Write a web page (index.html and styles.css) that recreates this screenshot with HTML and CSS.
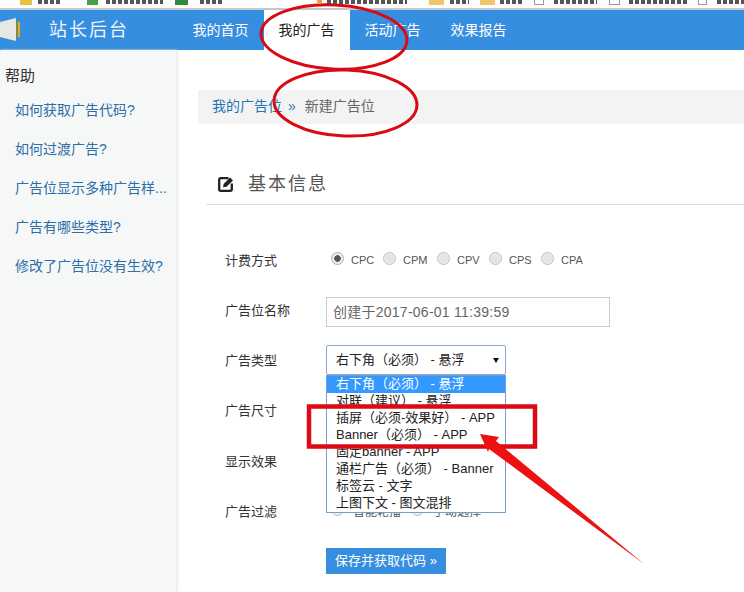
FILE: index.html
```html
<!DOCTYPE html>
<html lang="zh">
<head>
<meta charset="utf-8">
<title>站长后台</title>
<link rel="stylesheet" href="styles.css">
</head>
<body>
<div class="page">
  <div class="bookmarks">
    <i></i><i class="star"></i><i></i><i class="tx"></i>
    <i></i><i class="green"></i><i></i><i class="tx"></i>
    <i></i><i class="leaf"></i><i></i><i class="tx"></i>
    <i></i><i class="orange"></i><i></i><i class="tx"></i>
    <i></i><i class="folder"></i><i></i><i class="tx"></i>
    <i></i><i class="folder"></i><i></i><i class="tx"></i>
    <i></i><i class="doc"></i><i></i><i class="tx"></i>
    <i></i><i class="doc"></i><i></i><i class="tx"></i>
    <i></i><i class="doc"></i><i></i><i class="tx"></i>
  </div>
  <header class="header">
    <div class="logo">
      <svg width="20" height="24" viewBox="0 0 20 24"><path d="M0 4 16 0V23L0 19Z" fill="#e8e8e2"/><rect x="16" y="4" width="2" height="15" fill="#7d8f45"/><rect x="18" y="4" width="2" height="15" fill="#e8a52c"/></svg>
    </div>
    <div class="brand">站长后台</div>
    <nav class="nav">
      <a class="nav-item">我的首页</a>
      <a class="nav-item active">我的广告</a>
      <a class="nav-item">活动广告</a>
      <a class="nav-item">效果报告</a>
    </nav>
  </header>
  <div class="body">
    <aside class="side">
      <h3 class="side-title">帮助</h3>
      <ul class="side-list">
        <li>如何获取广告代码?</li>
        <li>如何过渡广告?</li>
        <li>广告位显示多种广告样...</li>
        <li>广告有哪些类型?</li>
        <li>修改了广告位没有生效?</li>
      </ul>
    </aside>
    <main class="main">
      <div class="crumb"><a>我的广告位</a><span class="sep">»</span><span class="cur">新建广告位</span></div>
      <div class="section">
        <svg class="edit" width="16" height="16" viewBox="0 0 16 16"><path d="M10.500 2.200H2.800Q1.200 2.200 1.200 3.800V13.200Q1.200 14.800 2.800 14.800H12.200Q13.800 14.800 13.800 13.200V7.500" fill="none" stroke="#222" stroke-width="2.300"/><path d="M5 11.300 5.600 8 12 1.600 15 4.500 8.500 10.800Z" fill="#222"/></svg>
        <h2>基本信息</h2>
      </div>
      <form class="form">
        <div class="row">
          <label class="lbl">计费方式</label>
          <div class="radios">
            <span class="opt opt-c"><span class="r on"></span><span class="rt">CPC</span></span>
            <span class="opt opt-m"><span class="r"></span><span class="rt">CPM</span></span>
            <span class="opt opt-c"><span class="r"></span><span class="rt">CPV</span></span>
            <span class="opt opt-c"><span class="r"></span><span class="rt">CPS</span></span>
            <span class="opt opt-c"><span class="r"></span><span class="rt">CPA</span></span>
          </div>
        </div>
        <div class="row">
          <label class="lbl">广告位名称</label>
          <div class="input">创建于2017-06-01 11:39:59</div>
        </div>
        <div class="row">
          <label class="lbl">广告类型</label>
          <div class="select-wrap">
            <div class="select">右下角（必须） - 悬浮<span class="caret"></span></div>
            <ul class="options">
              <li class="sel">右下角（必须） - 悬浮</li>
              <li>对联（建议） - 悬浮</li>
              <li>插屏（必须-效果好） - APP</li>
              <li>Banner（必须） - APP</li>
              <li>固定banner - APP</li>
              <li>通栏广告（必须） - Banner</li>
              <li>标签云 - 文字</li>
              <li>上图下文 - 图文混排</li>
            </ul>
          </div>
        </div>
        <div class="row row-tall"><label class="lbl">广告尺寸</label></div>
        <div class="row"><label class="lbl">显示效果</label></div>
        <div class="row row-last">
          <label class="lbl">广告过滤</label>
          <div class="radios">
            <span class="opt opt-w"><span class="r"></span><span class="rt rt-cn">智能轮播</span></span>
            <span class="opt opt-w"><span class="r"></span><span class="rt rt-cn">手动选择</span></span>
          </div>
        </div>
        <button type="button" class="save">保存并获取代码 »</button>
      </form>
    </main>
  </div>
  <svg class="marks" width="744" height="592" viewBox="0 0 744 592">
    <ellipse cx="334" cy="37" rx="73" ry="32" transform="rotate(3 334 37)" fill="none" stroke="#d80a14" stroke-width="3"/>
    <ellipse cx="345.500" cy="103" rx="71.500" ry="33" transform="rotate(2 345.500 103)" fill="none" stroke="#d80a14" stroke-width="3"/>
    <rect x="309" y="406.500" width="226" height="40" fill="none" stroke="#dd0a14" stroke-width="4.500"/>
    <path d="M480 434 499 437 496 441 644 564 489 449 488 452Z" fill="#ee1111"/>
  </svg>
</div>
</body>
</html>
```
FILE: styles.css
```css
* { box-sizing: border-box; }
html, body { margin: 0; padding: 0; background: #fff; }
body { font-family: "Liberation Sans", "Noto Sans CJK SC", sans-serif; font-size: 13px; color: #333; }
ul { list-style: none; margin: 0; padding: 0; }
.page { position: relative; width: 744px; height: 592px; overflow: hidden; }

.bookmarks { height: 10px; background: #fdfdfd; border-bottom: 2px solid #c4c6c8; display: grid; grid-template-columns: 20px 12px 6px 24px 25px 11px 8px 57px 12px 13px 12px 22px 95px 5px 5px 80px 22px 15px 6px 19px 11px 15px 5px 22px 12px 10px 10px 43px 12px 11px 9px 58px 11px 9px 10px 27px; grid-template-rows: 5px; }
.bookmarks i { display: block; }
.tx { background: repeating-linear-gradient(90deg, #555 0 4px, transparent 4px 6px); height: 4px; }
.star { background: #e8c040; }
.green { background: #4aa04a; }
.leaf { background: #2f8a3c; }
.orange { background: #e8a040; height: 3px; }
.folder { background: #edc768; }
.doc { background: #fff; border: 1px solid #999; border-top: 0; }

.header { height: 40px; background: #368ee0; display: flex; align-items: stretch; color: #fff; }
.logo { width: 49px; display: flex; align-items: center; }
.brand { width: 129px; font-size: 18px; line-height: 41px; letter-spacing: 2px; color: #f0f6fc; }
.nav { display: flex; }
.nav-item { width: 86px; padding-right: 1px; text-align: center; font-size: 14px; line-height: 40px; color: #fff; }
.nav-item.active { background: #fff; color: #222; }

.body { display: flex; height: 542px; }
.side { width: 177px; flex: none; background: #f6f8f8; border-right: 1px solid #eef0f0; padding: 16px 0 0 5px; box-shadow: 1px 0 2px #eee; }
.side-title { margin: 0 0 5px; font-size: 15px; font-weight: 400; line-height: 20px; color: #333; }
.side-list li { height: 39px; line-height: 39px; padding-left: 10px; color: #2c6ea8; font-size: 14px; white-space: nowrap; }

.main { flex: 1; padding: 40px 0 0 21px; min-width: 0; }
.crumb { height: 34px; background: #f3f3f3; padding-left: 14px; line-height: 33px; font-size: 14px; color: #666; white-space: nowrap; }
.crumb a { color: #1f78b0; }
.sep { color: #1f78b0; margin: 0 9px 0 6px; }
.section { margin: 46px 0 0 8px; height: 35px; border-bottom: 1px solid #ddd; display: flex; align-items: flex-start; padding-left: 12px; }
.edit { margin-top: 6px; flex: none; }
.section h2 { margin: 0 0 0 14px; font-size: 18px; font-weight: 400; line-height: 28px; color: #555; letter-spacing: 2px; }

.form { padding: 44px 0 0 27px; }
.row { display: flex; align-items: flex-start; height: 50px; }
.row-tall { height: 51px; }
.row-last { height: 48px; }
.lbl { width: 101px; flex: none; font-size: 13px; line-height: 23px; color: #333; white-space: nowrap; }
.radios { display: flex; align-items: flex-start; margin-left: 5px; }
.opt { display: flex; align-items: flex-start; }
.opt-c { width: 52px; }
.opt-m { width: 54px; }
.opt-w { width: 80px; }
.r { width: 13px; height: 13px; flex: none; margin-top: 3px; border-radius: 50%; border: 1px solid #c0c0c0; background: #e4e4e4; box-shadow: inset 0 0 2px #fff; }
.r.on { background: radial-gradient(circle, #555 0 3px, #e8e8e8 3.500px); border-color: #b0b0b0; }
.rt { margin-left: 7px; font-size: 11px; line-height: 23px; color: #555; white-space: nowrap; }
.rt-cn { margin-left: 9px; font-size: 12px; line-height: 25px; }
.input { width: 284px; height: 30px; margin-top: -2px; border: 1px solid #ccc; padding: 0 6px; line-height: 28px; font-size: 14px; letter-spacing: 0.250px; color: #666; background: #fff; white-space: nowrap; }
.select-wrap { position: relative; width: 180px; margin-top: -4px; }
.select { height: 30px; border: 1px solid #8aa8d0; border-radius: 2px; line-height: 28px; padding-left: 9px; font-size: 13px; color: #222; position: relative; background: #fff; white-space: nowrap; }
.caret { position: absolute; right: 6px; top: 12px; border: 3px solid transparent; border-top: 5px solid #111; border-bottom: 0; }
.options { position: absolute; left: 0; top: 30px; width: 180px; background: #fff; border: 1px solid #7a9cc8; z-index: 2; }
.options li { height: 17px; line-height: 15px; padding-left: 9px; font-size: 13px; color: #222; white-space: nowrap; overflow: hidden; }
.options li.sel { background: #3399ff; color: #fff; }
.save { display: block; margin: 0 0 0 101px; width: 120px; height: 26px; border: 0; background: #368ee0; color: #fff; font-family: inherit; font-size: 13px; padding: 0 0 3px; text-align: center; }

.marks { position: absolute; left: 0; top: 0; pointer-events: none; z-index: 5; }
```
